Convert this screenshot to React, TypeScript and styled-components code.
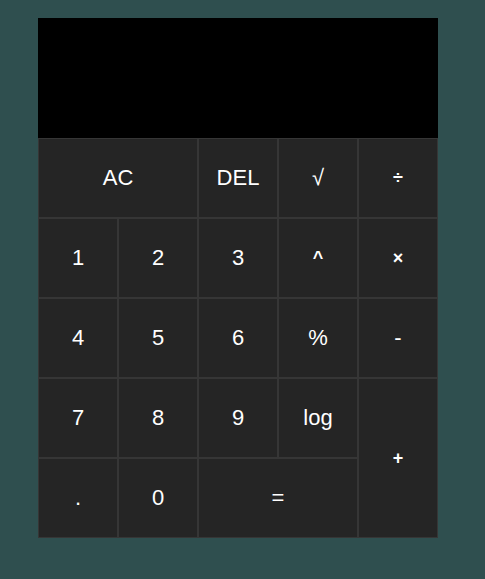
import React from "react";
import styled, { createGlobalStyle } from "styled-components";

const Global = createGlobalStyle`
  html, body {
    margin: 0;
    padding: 0;
    background: #2f4f4f;
    min-height: 100%;
    font-family: "Liberation Sans", Arial, sans-serif;
  }
`;

const Page = styled.div`
  padding: 18px 0 0 38px;
`;

const Calculator = styled.div`
  width: 400px;
  display: flex;
  flex-direction: column;
`;

const Display = styled.div`
  height: 120px;
  background: #000;
  color: #fff;
`;

const Keys = styled.div`
  display: grid;
  grid-template-columns: repeat(5, 80px);
  grid-auto-rows: 80px;
`;

const Key = styled.button<{ $cols?: number; $rows?: number }>`
  grid-column: span ${(p) => p.$cols ?? 1};
  grid-row: span ${(p) => p.$rows ?? 1};
  box-sizing: border-box;
  margin: 0;
  padding: 0;
  background: #252525;
  border: 1px solid #363636;
  color: #fff;
  font-family: "Liberation Sans", Arial, sans-serif;
  font-size: 22px;
  display: flex;
  align-items: center;
  justify-content: center;
  cursor: pointer;
`;

const SmallKey = styled(Key)`
  font-size: 18px;
  font-weight: bold;
`;

export default function App() {
  return (
    <>
      <Global />
      <Page>
        <Calculator>
          <Display />
          <Keys>
            <Key $cols={2}>AC</Key>
            <Key>DEL</Key>
            <Key>√</Key>
            <SmallKey>÷</SmallKey>
            <Key>1</Key>
            <Key>2</Key>
            <Key>3</Key>
            <SmallKey>^</SmallKey>
            <SmallKey>×</SmallKey>
            <Key>4</Key>
            <Key>5</Key>
            <Key>6</Key>
            <Key>%</Key>
            <Key>-</Key>
            <Key>7</Key>
            <Key>8</Key>
            <Key>9</Key>
            <Key>log</Key>
            <SmallKey $rows={2}>+</SmallKey>
            <Key>.</Key>
            <Key>0</Key>
            <Key $cols={2}>=</Key>
          </Keys>
        </Calculator>
      </Page>
    </>
  );
}
